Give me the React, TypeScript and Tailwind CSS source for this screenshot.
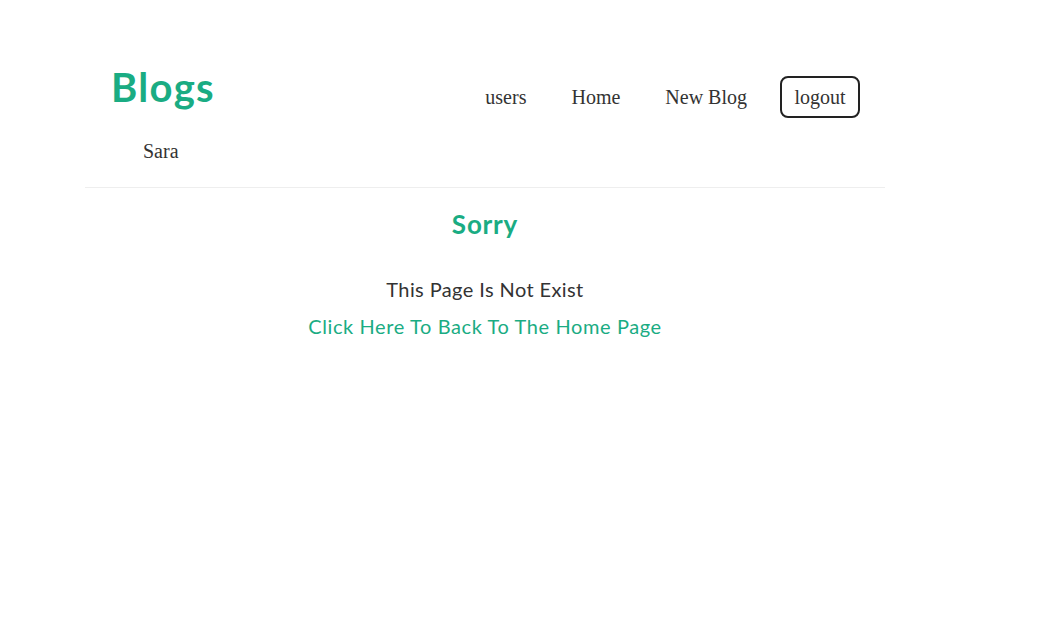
import React from 'react';

const navLinks = ['users', 'Home', 'New Blog'];

const App: React.FC = () => {
  return (
    <div className="min-h-screen bg-white">
      <div className="w-[800px] ml-[85px] pt-[60px]">
        {/* Header */}
        <header className="border-b border-[#eeeeee]">
          <div className="flex items-start justify-between pl-[26px] pr-[25px]">
            <h1 className="text-[40px] leading-[54px] font-bold text-[#1aac83] font-['Lato',sans-serif] tracking-[1.3px]">
              Blogs
            </h1>
            <nav className="flex items-center mt-[16px] font-['Liberation_Serif',serif] text-[20px] text-[#333333]">
              {navLinks.map((link) => (
                <a key={link} href="#" className="mr-[45px]">
                  {link}
                </a>
              ))}
              <button className="h-[42px] w-[80px] -ml-[12px] border-2 border-[#222222] rounded-[8px] bg-white text-[#333333] text-[20px] font-['Liberation_Serif',serif]">
                logout
              </button>
            </nav>
          </div>
          <p className="pl-[58px] pt-[21px] pb-[24px] font-['Liberation_Serif',serif] text-[20px] leading-[24px] text-[#333333]">
            Sara
          </p>
        </header>

        {/* Not found */}
        <main className="text-center font-['Lato',sans-serif]">
          <h2 className="mt-[20px] text-[26px] leading-[32px] font-bold text-[#1aac83] tracking-[0.8px]">Sorry</h2>
          <p className="mt-[37px] text-[20px] leading-[24px] text-[#333333] tracking-[0.4px]">This Page Is Not Exist</p>
          <a href="#" className="inline-block mt-[13px] text-[20px] leading-[24px] text-[#1aac83] tracking-[0.6px]">
            Click Here To Back To The Home Page
          </a>
        </main>
      </div>
    </div>
  );
};

export default App;
